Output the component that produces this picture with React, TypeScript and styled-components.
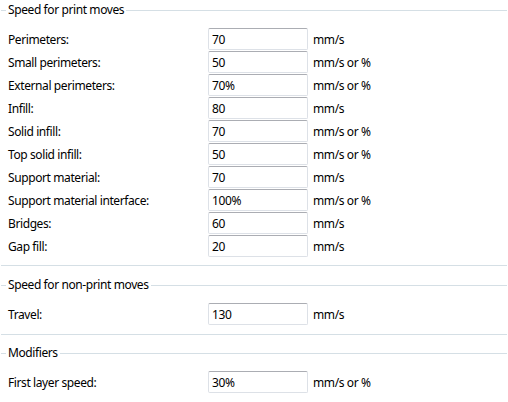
import React from "react";
import styled, { createGlobalStyle } from "styled-components";

interface Field {
  label: string;
  value: string;
  unit: string;
}

interface GroupData {
  title: string;
  fields: Field[];
  padBottom: number;
  spaceAfter: number;
}

const groups: GroupData[] = [
  {
    title: "Speed for print moves",
    padBottom: 8,
    spaceAfter: 9,
    fields: [
      { label: "Perimeters:", value: "70", unit: "mm/s" },
      { label: "Small perimeters:", value: "50", unit: "mm/s or %" },
      { label: "External perimeters:", value: "70%", unit: "mm/s or %" },
      { label: "Infill:", value: "80", unit: "mm/s" },
      { label: "Solid infill:", value: "70", unit: "mm/s or %" },
      { label: "Top solid infill:", value: "50", unit: "mm/s or %" },
      { label: "Support material:", value: "70", unit: "mm/s" },
      { label: "Support material interface:", value: "100%", unit: "mm/s or %" },
      { label: "Bridges:", value: "60", unit: "mm/s" },
      { label: "Gap fill:", value: "20", unit: "mm/s" },
    ],
  },
  {
    title: "Speed for non-print moves",
    padBottom: 9,
    spaceAfter: 8,
    fields: [{ label: "Travel:", value: "130", unit: "mm/s" }],
  },
  {
    title: "Modifiers",
    padBottom: 9,
    spaceAfter: 0,
    fields: [{ label: "First layer speed:", value: "30%", unit: "mm/s or %" }],
  },
];

export default function App() {
  return <>
    <GlobalStyle/>
    <Page>
      {groups.map((g, i) => (
        <Group
          key={g.title}
          $pad={g.padBottom}
          $after={g.spaceAfter}
          $open={i === groups.length - 1}
        >
          <Header>
            <LeadLine/>
            <Title>{g.title}</Title>
            <TailLine/>
          </Header>
          <Rows>
            {g.fields.map(f => (
              <Row key={f.label}>
                <Label>{f.label}</Label>
                <Input defaultValue={f.value}/>
                <Unit>{f.unit}</Unit>
              </Row>
            ))}
          </Rows>
        </Group>
      ))}
    </Page>
  </>;
}

const GlobalStyle = createGlobalStyle`
  html, body {
    margin: 0;
    padding: 0;
    background: #ffffff;
  }
  body {
    font-family: "Noto Sans", "Open Sans", sans-serif;
    font-size: 12px;
    letter-spacing: -0.4px;
    color: #000000;
  }
`;

const Page = styled.div`
  display: flex;
  flex-direction: column;
  width: 508px;
  height: 402px;
  overflow: hidden;
`;

// the last frame runs past the bottom of the panel, so its lower edge is not drawn
const Group = styled.div<{ $pad: number; $after: number; $open: boolean }>`
  display: flex;
  flex-direction: column;
  flex-shrink: 0;
  margin: 0 1px ${p => p.$after}px;
  padding-bottom: ${p => p.$pad}px;
  border-bottom: ${p => p.$open ? "none" : "1px solid #d5dfe5"};
`;

const Header = styled.div`
  display: flex;
  align-items: center;
  height: 20px;
`;

const LeadLine = styled.div`
  width: 5px;
  height: 1px;
  background: #d5dfe5;
`;

const TailLine = styled.div`
  flex: 1;
  height: 1px;
  background: #d5dfe5;
`;

const Title = styled.span`
  padding: 0 2px;
  line-height: 20px;
`;

const Rows = styled.div`
  display: flex;
  flex-direction: column;
  gap: 1px;
  padding-top: 8px;
`;

const Row = styled.div`
  display: flex;
  align-items: center;
  height: 22px;
  padding-left: 7px;
`;

const Label = styled.span`
  width: 200px;
`;

const Input = styled.input`
  box-sizing: border-box;
  width: 100px;
  height: 22px;
  margin: 0;
  padding: 0 3px;
  font: inherit;
  letter-spacing: inherit;
  color: #000000;
  background: #ffffff;
  border: 1px solid #dde1e7;
  border-top-color: #abadb3;
  border-radius: 2px;
  outline: none;
`;

const Unit = styled.span`
  margin-left: 5px;
`;
